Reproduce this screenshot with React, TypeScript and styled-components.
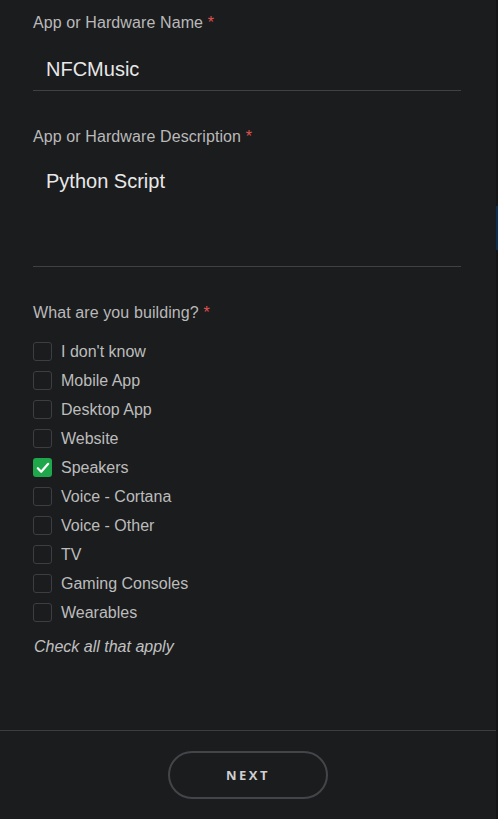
import { createGlobalStyle, styled } from "styled-components";

const GlobalStyle = createGlobalStyle`
    html, body {
        margin: 0;
        padding: 0;
        background: #1b1c1e;
    }
    body {
        font-family: "Liberation Sans", Arial, sans-serif;
    }
`;

const StyledPage = styled.div`
    display: flex;
    width: 498px;
    height: 819px;
    background: #1b1c1e;
    overflow: hidden;

    .page__main {
        flex: 1;
        display: flex;
        flex-direction: column;
    }
    .page__scroll {
        width: 2px;
        background: #141517;
        padding-top: 206px;
    }
    .page__thumb {
        height: 44px;
        background: #0f2e4e;
    }
`;

const Form = styled.form`
    flex: 1;
    padding: 14px 35px 0 33px;
`;

const Field = styled.div<{ $tall?: boolean }>`
    margin-bottom: 37px;
    .field__input {
        padding: ${(p) => (p.$tall ? "23px 0 73px 13px" : "25px 0 9px 13px")};
        border-bottom: 1px solid #404143;
        color: #e8e8e8;
        font-size: 20px;
        line-height: 24px;
    }
`;

const Label = styled.label`
    display: block;
    color: #b9b9b9;
    font-size: 16px;
    letter-spacing: 0.1px;
    line-height: 18px;
    span {
        color: #e0524f;
    }
`;

const Options = styled.ul`
    list-style: none;
    margin: 20px 0 0;
    padding: 0;
    display: flex;
    flex-direction: column;
    gap: 10px;
`;

const Option = styled.li`
    display: flex;
    align-items: center;
    gap: 9px;
    color: #bcbcbc;
    font-size: 16px;
    line-height: 19px;
`;

const Box = styled.span<{ $checked?: boolean }>`
    width: 19px;
    height: 19px;
    box-sizing: border-box;
    border-radius: 3px;
    border: ${(p) => (p.$checked ? "none" : "1px solid #3d3e41")};
    background: ${(p) => (p.$checked ? "#1fa84b" : "transparent")};
    display: flex;
    align-items: center;
    justify-content: center;
`;

const Hint = styled.p`
    margin: 16px 0 0 1px;
    color: #c0c0c0;
    font-size: 16px;
    font-style: italic;
`;

const Footer = styled.footer`
    border-top: 1px solid #3c3d3f;
    height: 89px;
    display: flex;
    justify-content: center;
    padding-top: 20px;
    box-sizing: border-box;
`;

const NextButton = styled.button`
    width: 160px;
    height: 48px;
    border-radius: 24px;
    border: 2px solid #444548;
    background: transparent;
    color: #cfcfcf;
    font-family: "Open Sans", sans-serif;
    font-weight: 700;
    font-size: 13px;
    letter-spacing: 2.5px;
`;

const options = [
    "I don't know",
    "Mobile App",
    "Desktop App",
    "Website",
    "Speakers",
    "Voice - Cortana",
    "Voice - Other",
    "TV",
    "Gaming Consoles",
    "Wearables",
];

const App = () => {
    return (
        <StyledPage>
            <GlobalStyle />
            <div className="page__main">
                <Form>
                    <Field>
                        <Label>App or Hardware Name <span>*</span></Label>
                        <div className="field__input">NFCMusic</div>
                    </Field>
                    <Field $tall>
                        <Label>App or Hardware Description <span>*</span></Label>
                        <div className="field__input">Python Script</div>
                    </Field>
                    <Label>What are you building? <span>*</span></Label>
                    <Options>
                        {options.map((o) => (
                            <Option key={o}>
                                <Box $checked={o === "Speakers"}>
                                    {o === "Speakers" && (
                                        <svg width="14" height="12" viewBox="0 0 14 12">
                                            <path d="M1.8 6.2 L5.2 9.8 L12.2 1.8" fill="none" stroke="#fff" strokeWidth="2.2" strokeLinecap="round" strokeLinejoin="round" />
                                        </svg>
                                    )}
                                </Box>
                                {o}
                            </Option>
                        ))}
                    </Options>
                    <Hint>Check all that apply</Hint>
                </Form>
                <Footer>
                    <NextButton type="button">NEXT</NextButton>
                </Footer>
            </div>
            <div className="page__scroll">
                <div className="page__thumb" />
            </div>
        </StyledPage>
    );
};

export default App;
